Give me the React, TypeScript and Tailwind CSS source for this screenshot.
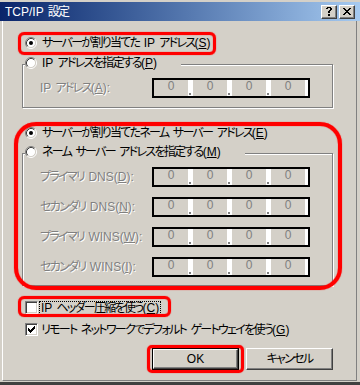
import React from 'react';

const font = "font-['Liberation_Sans','Noto_Sans_CJK_JP',sans-serif] [font-feature-settings:'palt'] tracking-[-1.7px]";

// pixel bitmaps for the classic glyphs
const closeGlyph = ['XX....XX', '.XX..XX.', '..XXXX..', '...XX...', '..XXXX..', '.XX..XX.', 'XX....XX'];
const helpGlyph = ['.XXXX.', 'XX..XX', '....XX', '...XX.', '..XX..', '..XX..', '......', '..XX..', '..XX..'];
const checkGlyph = ['......X', '.....XX', 'X...XXX', 'XX.XXX.', 'XXXXX..', '.XXX...', '..X....'];

const Pixels = ({ rows, color = '#000' }: { rows: string[]; color?: string }) => (
  <svg width={rows[0].length} height={rows.length} shapeRendering="crispEdges" className="block">
    {rows.map((r, y) =>
      r.split('').map((c, x) => (c === 'X' ? <rect key={`${x}-${y}`} x={x} y={y} width={1} height={1} fill={color} /> : null))
    )}
  </svg>
);

// latin runs keep normal spacing, the japanese runs are tightened
const A = ({ children }: { children: React.ReactNode }) => (
  <span className="whitespace-pre tracking-normal [word-spacing:1px]">{children}</span>
);
const U = ({ children }: { children: React.ReactNode }) => <span className="underline underline-offset-[1px]">{children}</span>;

const Radio = ({ checked }: { checked?: boolean }) => (
  <svg width="12" height="12" viewBox="0 0 12 12" className="block shrink-0">
    <circle cx="6" cy="6" r="4.5" fill="#fff" />
    <path d="M2.11 9.89 A5.5 5.5 0 0 1 9.89 2.11" fill="none" stroke="#808080" />
    <path d="M9.89 2.11 A5.5 5.5 0 0 1 2.11 9.89" fill="none" stroke="#fff" />
    <path d="M2.82 9.18 A4.5 4.5 0 0 1 9.18 2.82" fill="none" stroke="#404040" />
    <path d="M9.18 2.82 A4.5 4.5 0 0 1 2.82 9.18" fill="none" stroke="#d4d0c8" />
    {checked && <circle cx="6" cy="6" r="2" fill="#000" />}
  </svg>
);

const Checkbox = ({ checked }: { checked?: boolean }) => (
  <div className="flex h-[13px] w-[13px] shrink-0 items-center justify-center border border-t-[#808080] border-l-[#808080] border-r-white border-b-white bg-white shadow-[inset_1px_1px_0_#404040,inset_-1px_-1px_0_#d4d0c8]">
    {checked && <Pixels rows={checkGlyph} />}
  </div>
);

const CaptionButton = ({ kind, className = '' }: { kind: 'help' | 'close'; className?: string }) => (
  <div
    className={`flex h-[14px] w-[16px] items-center justify-center border border-t-white border-l-white border-r-[#404040] border-b-[#404040] bg-[#d4d0c8] shadow-[inset_-1px_-1px_0_#808080] ${className}`}
  >
    {kind === 'help' ? <Pixels rows={helpGlyph} /> : <Pixels rows={closeGlyph} />}
  </div>
);

const IpField = () => (
  <div className="flex h-[20px] w-[158px] shrink-0 border-2 border-black bg-white pr-[3px] font-['Liberation_Sans',sans-serif] tracking-normal">
    {[0, 1, 2, 3].map(i => (
      <React.Fragment key={i}>
        {i > 0 && (
          <div className="flex w-[5px] items-end pb-px pl-px">
            <span className="h-[2px] w-[2px] bg-[#808080]" />
          </div>
        )}
        <div className="w-[34px] bg-[#d4d0c8] text-center leading-[12px] text-[#808080]">0</div>
      </React.Fragment>
    ))}
  </div>
);

const disabled = 'text-[#808080] [text-shadow:1px_1px_0_#fff]';

const FieldRow = ({ label }: { label: React.ReactNode }) => (
  <div className="flex h-[20px] items-center">
    <span className={`w-[112px] ${disabled}`}>{label}</span>
    <IpField />
  </div>
);

const GroupBox = ({ legend, height, children }: { legend: React.ReactNode; height: string; children: React.ReactNode }) => (
  <div className={`relative ml-[19px] w-[311px] border border-[#808080] shadow-[inset_1px_1px_0_#fff,1px_1px_0_#fff] ${height}`}>
    <div className="absolute left-[2px] top-[-9px] flex h-[14px] items-center gap-[5px] bg-[#d4d0c8] pr-[24px]">
      <Radio />
      <span>{legend}</span>
    </div>
    <div className="flex flex-col gap-[10px] pl-[17px] pt-[13px]">{children}</div>
  </div>
);

const ring = 'pointer-events-none absolute border-[#ff0000] shadow-[0_0_1px_#ff0000,inset_0_0_1px_#ff0000]';

export default function App() {
  return (
    <div className={`relative flex h-[385px] w-[360px] flex-col overflow-hidden border-b-[3px] border-[#404040] bg-[#d4d0c8] pt-[2px] text-[12px] leading-[14px] text-black ${font}`}>
      <div className="flex h-[19px] shrink-0 items-center bg-linear-to-r from-[#0a246a] to-[#a6caf0] pl-[5px] pr-[5px]">
        <span className="flex-1 text-white">
          <A>TCP/IP </A>設定
        </span>
        <CaptionButton kind="help" />
        <CaptionButton kind="close" className="ml-[2px]" />
      </div>

      <div className="mb-px ml-[2px] mr-[3px] flex flex-1 flex-col border border-t-0 border-l-white border-r-[#808080] border-b-[#808080]">
        <div className="ml-[22px] mt-[14px] flex h-[16px] items-center gap-[5px]">
          <Radio checked />
          <span>
            サーバーが割り当てた<A> IP </A>アドレス<A>(<U>S</U>)</A>
          </span>
        </div>

        <div className="mt-[13px]">
          <GroupBox height="h-[44px]" legend={<><A>IP </A>アドレスを指定する<A>(<U>P</U>)</A></>}>
            <FieldRow label={<><A>IP </A>アドレス<A>(<U>A</U>):</A></>} />
          </GroupBox>
        </div>

        <div className="ml-[22px] mt-[17px] flex h-[16px] items-center gap-[5px]">
          <Radio checked />
          <span>
            サーバーが割り当てたネーム<A> </A>サーバー<A> </A>アドレス<A>(<U>E</U>)</A>
          </span>
        </div>

        <div className="mt-[12px]">
          <GroupBox height="h-[133px]" legend={<>ネーム<A> </A>サーバー<A> </A>アドレスを指定する<A>(<U>M</U>)</A></>}>
            <FieldRow label={<>プライマリ<A> DNS(<U>D</U>):</A></>} />
            <FieldRow label={<>セカンダリ<A> DNS(<U>N</U>):</A></>} />
            <FieldRow label={<>プライマリ<A> WINS(<U>W</U>):</A></>} />
            <FieldRow label={<>セカンダリ<A> WINS(<U>I</U>):</A></>} />
          </GroupBox>
        </div>

        <div className="ml-[22px] mt-[14px] flex h-[15px] items-center">
          <Checkbox />
          <span className="ml-px flex h-[14px] items-center border border-dotted border-black px-px">
            <A>IP </A>ヘッダー圧縮を使う<A>(<U>C</U>)</A>
          </span>
        </div>

        <div className="ml-[22px] mt-[7px] flex h-[15px] items-center gap-[3px]">
          <Checkbox checked />
          <span>
            リモート<A> </A>ネットワークでデフォルト<A> </A>ゲートウェイを使う<A>(<U>G</U>)</A>
          </span>
        </div>

        <div className="mt-[11px] flex justify-end gap-[7px] pr-[23px]">
          <button className="h-[22px] w-[87px] border border-black bg-[#d4d0c8] p-0">
            <div className="flex h-full w-full items-center justify-center border border-t-white border-l-white border-r-[#404040] border-b-[#404040] shadow-[inset_-1px_-1px_0_#808080]">
              <A>OK</A>
            </div>
          </button>
          <button className="flex h-[22px] w-[87px] items-center justify-center border border-t-white border-l-white border-r-[#404040] border-b-[#404040] bg-[#d4d0c8] shadow-[inset_-1px_-1px_0_#808080]">
            キャンセル
          </button>
        </div>
      </div>

      {/* red annotation rings */}
      <div className={`${ring} left-[18px] top-[32px] h-[23px] w-[198px] rounded-[6px] border-[3px]`} />
      <div className={`${ring} left-[14px] top-[122px] h-[168px] w-[328px] rounded-[22px] border-[4px]`} />
      <div className={`${ring} left-[18px] top-[296px] h-[21px] w-[153px] rounded-[6px] border-[3px]`} />
      <div className={`${ring} left-[147px] top-[345px] h-[28px] w-[97px] rounded-[5px] border-[3px]`} />
    </div>
  );
}
